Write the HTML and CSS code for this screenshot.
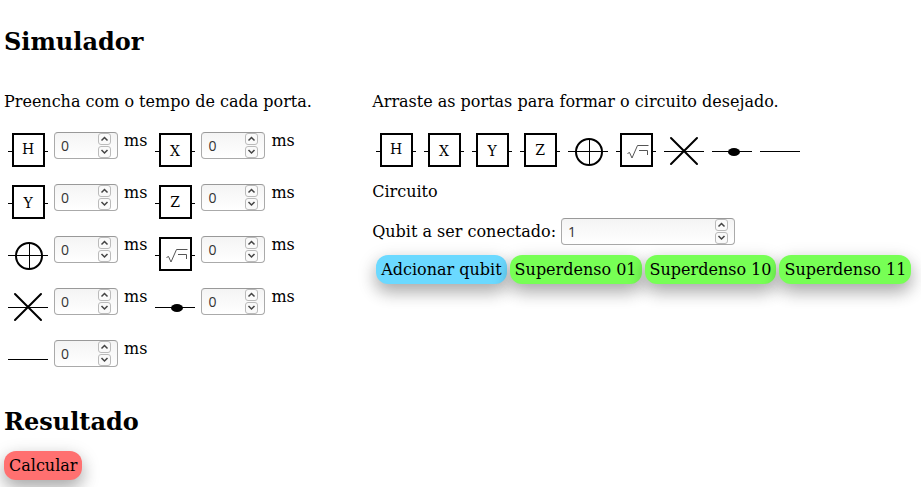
FILE: index.html
```html
<!DOCTYPE html>
<html lang="pt-BR">
<head>
<meta charset="utf-8">
<meta name="viewport" content="width=device-width, initial-scale=1">
<title>Simulador</title>
<link rel="stylesheet" href="styles.css">
</head>
<body>
<h2>Simulador</h2>
<main class="columns">
  <section>
    <p>Preencha com o tempo de cada porta.</p>
    <div class="times" id="times"></div>
  </section>
  <section>
    <p>Arraste as portas para formar o circuito desejado.</p>
    <div class="palette" id="palette"></div>
    <p class="circuit">Circuito</p>
    <div class="connect">
      <label for="qubit">Qubit a ser conectado:</label>
      <span class="number wide"><input id="qubit" type="number" value="1"></span>
    </div>
    <div class="actions">
      <button class="btn blue" type="button">Adcionar qubit</button>
      <button class="btn green" type="button">Superdenso 01</button>
      <button class="btn green" type="button">Superdenso 10</button>
      <button class="btn green" type="button">Superdenso 11</button>
    </div>
  </section>
</main>
<h2 class="result">Resultado</h2>
<button class="btn red" type="button">Calcular</button>
<script src="app.js"></script>
</body>
</html>
```

FILE: styles.css
```css
* { box-sizing: border-box; }

body {
  min-height: 100vh;
  margin: 0;
  padding: 28px 4px 7px;
  background: #fff;
  color: #000;
  font: 16px/20px "DejaVu Serif", serif;
}

h2 { margin: 0; font-size: 24px; line-height: 28px; }

p { margin: 0; }

.columns {
  display: grid;
  grid-template-columns: 2fr 3fr;
  column-gap: 5px;
  margin-top: 36px;
}

.columns section { min-width: 0; }

.times {
  display: grid;
  grid-template-columns: max-content max-content;
  column-gap: 8px;
  row-gap: 12px;
  margin: 19px 0 0 4px;
}

.time { display: flex; gap: 6px; height: 40px; }

.time .number { margin-top: 2px; }

.gate {
  display: block;
  width: 40px;
  height: 40px;
  flex: none;
  font-size: 14px;
  text-anchor: middle;
}

.number {
  display: flex;
  width: 64px;
  height: 27px;
  padding-right: 6px;
  border: 1px solid #aaa;
  border-top-color: #999;
  border-radius: 4px;
  background: linear-gradient(#f4f4f4, #fff);
}

.time .number { margin-top: 1px; }

.number input {
  flex: 1;
  min-width: 0;
  padding: 0 0 1px 6px;
  border: 0;
  background: none;
  color: #333;
  font: 14px "Open Sans", sans-serif;
  appearance: textfield;
}

.number input::-webkit-inner-spin-button { appearance: none; margin: 0; }

.spin { display: flex; flex-direction: column; gap: 1px; }

.spin button {
  width: 13px;
  height: 12px;
  padding: 0;
  border: 1px solid #bbb;
  border-radius: 3px;
  background: #fafafa;
}

.spin svg { display: block; width: 11px; height: 10px; }

.palette { display: flex; gap: 8px; margin: 19px 0 0 4px; }

.circuit { margin-top: 11px; }

.connect {
  display: flex;
  align-items: center;
  gap: 5px;
  margin-top: 16px;
}

.wide { width: 174px; }

.actions {
  display: flex;
  gap: 3px;
  margin: 10px 0 0 4px;
}

.btn {
  flex: none;
  padding: 5px;
  border: 0;
  border-radius: 12px;
  color: #000;
  font: inherit;
  line-height: 19px;
  white-space: nowrap;
  box-shadow: 0 8px 16px rgba(0, 0, 0, 0.2), 0 6px 20px rgba(0, 0, 0, 0.19);
}

.blue { background: #6bd9ff; }
.green { background: #77ff55; }
.red { background: #ff7070; }

.result { margin: 29px 0 15px; }
```

FILE: app.js
```js
const line = '<path d="M0 20.5H40" stroke="#000"/>';
const box = '<path d="M0 20.5H4M37 20.5H40" stroke="#000"/><rect x="5" y="3" width="31" height="32" fill="#fff" stroke="#000" stroke-width="2"/>';
const letter = (name, y) => `${box}<text x="20" y="${y}">${name}</text>`;

const gates = {
  h: letter("H", 23),
  x: letter("X", 25),
  y: letter("Y", 25),
  z: letter("Z", 24),
  not: line + '<path d="M21.5 8V34" stroke="#000"/><circle cx="21" cy="21" r="13" fill="none" stroke="#000" stroke-width="2"/>',
  root: box + '<path d="M11.5 22.5L13.5 21.5L16 27L21.5 14.5H32.5M23 19.5H31.5V24" fill="none" stroke="#555"/>',
  swap: line + '<path d="M7 7L33 33M33 7L7 33" stroke="#000" stroke-width="2" stroke-linecap="round"/>',
  control: line + '<ellipse cx="22" cy="21" rx="6" ry="4"/>',
  wire: line
};

const gate = id => `<svg class="gate" viewBox="0 0 40 40">${gates[id]}</svg>`;
const arrow = d => `<svg viewBox="0 0 11 10"><path d="${d}" fill="none" stroke="#444" stroke-width="1.5"/></svg>`;
const spin = `<span class="spin">
  <button type="button" aria-label="Aumentar" data-step="1">${arrow("M2.5 6.5L5.500 3.5L8.5 6.5")}</button>
  <button type="button" aria-label="Diminuir" data-step="-1">${arrow("M2.5 3L5.500 6L8.5 3")}</button>
</span>`;

const ids = Object.keys(gates);
document.getElementById("palette").innerHTML = ids.map(gate).join("");
document.getElementById("times").innerHTML = ids.map(id =>
  `<label class="time" for="t-${id}">${gate(id)}<span class="number"><input id="t-${id}" type="number" value="0"></span><span>ms</span></label>`
).join("");

document.querySelectorAll(".number").forEach(field => {
  field.insertAdjacentHTML("beforeend", spin);
  field.addEventListener("click", e => {
    const button = e.target.closest("button");
    if (button) field.querySelector("input").stepUp(Number(button.dataset.step));
  });
});
```
